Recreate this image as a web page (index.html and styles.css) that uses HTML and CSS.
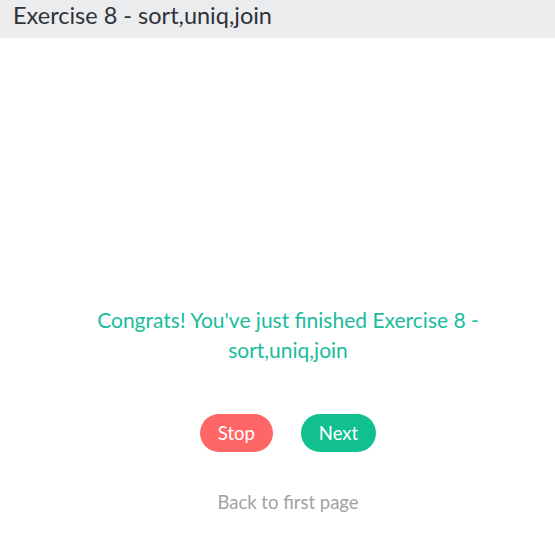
FILE: index.html
```html
<!DOCTYPE html>
<html>
<head>
<meta charset="utf-8">
<link rel="stylesheet" href="styles.css">
</head>
<body>
<header class="topbar">
  <h1 class="title">Exercise 8 - sort,uniq,join</h1>
</header>
<main class="content">
  <p class="congrats">Congrats! You've just finished Exercise 8 - sort,uniq,join</p>
  <div class="actions">
    <a class="btn btn-stop">Stop</a>
    <a class="btn btn-next">Next</a>
  </div>
  <a class="back">Back to first page</a>
</main>
</body>
</html>
```
FILE: styles.css
```css
html, body {
  margin: 0;
  padding: 0;
  background: #fff;
  font-family: Lato, "Open Sans", sans-serif;
}
.topbar {
  background: #ebecee;
  height: 38px;
  display: flex;
  align-items: center;
  padding-left: 13px;
}
.title {
  margin: 0;
  font-size: 23.5px;
  font-weight: 400;
  color: #2f3338;
  line-height: 1;
  position: relative;
  top: -3px;
}
.content {
  display: flex;
  flex-direction: column;
  align-items: center;
  padding: 267px 46px 0 67px;
}
.congrats {
  margin: 0;
  font-size: 21px;
  line-height: 30px;
  color: #1abc9c;
  text-align: center;
}
.actions {
  display: flex;
  gap: 28px;
  margin-top: 49px;
}
.btn {
  display: flex;
  align-items: center;
  justify-content: center;
  height: 38px;
  padding: 0 18px;
  border-radius: 19px;
  font-size: 18.5px;
  color: #fff;
}
.btn-stop {
  background: #ff6666;
}
.btn-next {
  background: #12bf8f;
}
.back {
  margin-top: 39px;
  font-size: 18.5px;
  color: #a2a2a2;
}
```
